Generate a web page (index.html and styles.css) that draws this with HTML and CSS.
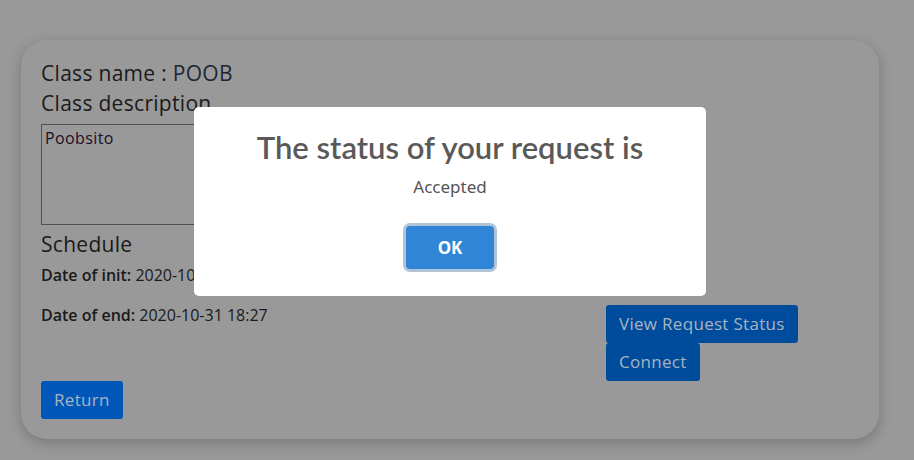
FILE: index.html
```html
<!DOCTYPE html>
<html lang="en">
<head>
<meta charset="utf-8">
<title>Class</title>
<link rel="stylesheet" href="styles.css">
</head>
<body>
<main class="page">
  <section class="card">
    <div class="left">
      <h2 class="title"><span class="label">Class name :</span> <span class="value">POOB</span></h2>
      <h2 class="title">Class description</h2>
      <textarea class="desc" readonly>Poobsito</textarea>
      <h2 class="title sched">Schedule</h2>
      <p class="date"><b>Date of init:</b> 2020-10-31 18:27</p>
      <p class="date end"><b>Date of end:</b> 2020-10-31 18:27</p>
      <button class="btn btn-return">Return</button>
    </div>
    <div class="right">
      <button class="btn btn-dark">View Request Status</button>
      <button class="btn btn-dark">Connect</button>
    </div>
  </section>
</main>
<div class="backdrop">
  <div class="modal" role="dialog">
    <h2 class="modal-title">The status of your request is</h2>
    <div class="modal-text">Accepted</div>
    <div class="modal-actions">
      <button class="ok">OK</button>
    </div>
  </div>
</div>
</body>
</html>
```
FILE: styles.css
```css
html, body {
  margin: 0;
  padding: 0;
}
body {
  background: #999999;
  font-family: "Open Sans", "Liberation Sans", sans-serif;
  color: #1a1a1a;
  width: 914px;
  height: 460px;
  overflow: hidden;
}
.page {
  padding: 40px 35px 0 21px;
}
.card {
  width: 858px;
  height: 399px;
  box-sizing: border-box;
  background: #999999;
  border-radius: 26px;
  box-shadow: 0 4px 14px rgba(0, 0, 0, 0.22);
  padding: 20px 20px 0 20px;
  display: grid;
  grid-template-columns: 545px auto;
  column-gap: 20px;
}
.left {
  display: flex;
  flex-direction: column;
  align-items: flex-start;
}
.title {
  margin: 0;
  font-size: 21px;
  line-height: 26px;
  letter-spacing: 0.3px;
  font-weight: 500;
  color: #1a1a1a;
}
.title + .title {
  margin-top: 4px;
}
.value {
  font-weight: 400;
  color: #1b2736;
}
.desc {
  margin-top: 8px;
  width: 300px;
  height: 101px;
  box-sizing: border-box;
  border: 1px solid #505050;
  background: transparent;
  resize: none;
  font-family: inherit;
  font-size: 16px;
  letter-spacing: 0.4px;
  color: #1a0f2a;
  padding: 2px 3px;
}
.sched {
  margin-top: 6px;
}
.date {
  margin: 8px 0 0 0;
  font-size: 16px;
  line-height: 20px;
  color: #1a1a1a;
}
.date b {
  font-weight: 600;
}
.date.end {
  margin-top: 20px;
}
.btn {
  font-family: inherit;
  font-size: 17px;
  letter-spacing: 0.3px;
  line-height: 24px;
  height: 38px;
  border: none;
  border-radius: 3px;
  padding: 0 13px;
  color: #a9b3c2;
  cursor: pointer;
}
.btn-return {
  margin-top: 56px;
  background: #0057b8;
}
.right {
  display: flex;
  flex-direction: column;
  align-items: flex-start;
  padding-top: 245px;
}
.btn-dark {
  background: #004c9c;
}
.backdrop {
  position: fixed;
  inset: 0;
  display: flex;
  justify-content: center;
  align-items: flex-start;
  padding-top: 107px;
  padding-right: 14px;
}
.modal {
  width: 512px;
  height: 189px;
  box-sizing: border-box;
  background: #ffffff;
  border-radius: 5px;
  text-align: center;
  padding-top: 20px;
  font-family: "Noto Sans", "Open Sans", sans-serif;
}
.modal-title {
  margin: 0;
  font-family: Lato, "Noto Sans", sans-serif;
  font-size: 31px;
  line-height: 40px;
  font-weight: 600;
  color: #595959;
}
.modal-text {
  margin-top: 8px;
  font-size: 17px;
  line-height: 24px;
  color: #545454;
}
.modal-actions {
  margin-top: 27px;
  display: flex;
  justify-content: center;
}
.ok {
  width: 88px;
  height: 43px;
  border: none;
  border-radius: 4px;
  background: #3085d6;
  color: #ffffff;
  font-family: inherit;
  font-size: 17px;
  font-weight: 700;
  box-shadow: 0 0 0 3px #b0c4d8;
}
```
